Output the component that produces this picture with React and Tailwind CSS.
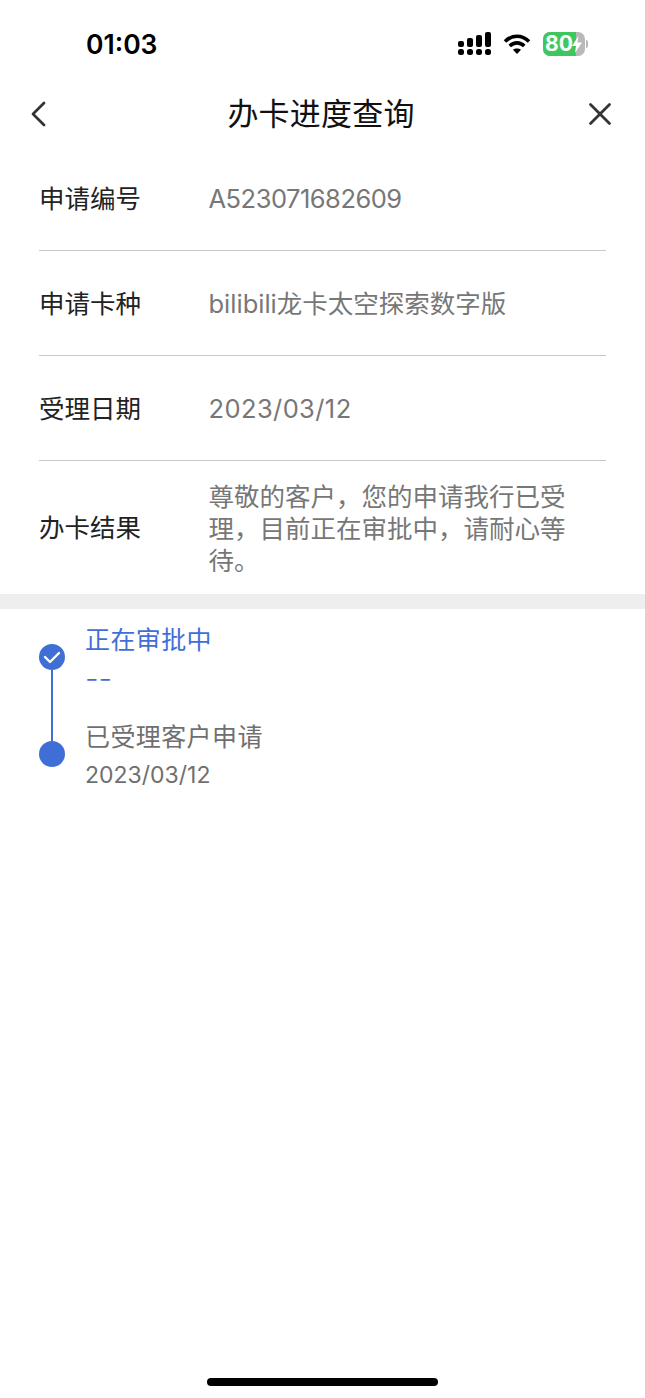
const CJK = "font-['Inter','Noto_Sans_CJK_SC',sans-serif]";

function StatusBar() {
  return (
    <div className="flex h-[84px] items-start justify-between pt-[26px] pl-[86px] pr-[57px]">
      <span className="text-[26.500px] leading-[36px] font-semibold text-black">01:03</span>
      <div className="mt-[6px] flex items-center">
        <svg width="34" height="24" viewBox="0 0 34 24" fill="#000">
          <rect x="0" y="9" width="6" height="6" rx="2" />
          <rect x="9" y="6" width="6" height="9" rx="2" />
          <rect x="18" y="3" width="6" height="12" rx="2" />
          <rect x="27" y="0" width="6" height="15" rx="2" />
          <rect x="0" y="17" width="6" height="6" rx="2.5" />
          <rect x="9" y="17" width="6" height="6" rx="2.5" />
          <rect x="18" y="17" width="6" height="6" rx="2.5" />
          <rect x="27" y="17" width="6" height="6" rx="2.5" />
        </svg>
        <svg className="ml-[11px]" width="28" height="22" viewBox="0 0 28 22" fill="none" stroke="#000" strokeWidth="3.6">
          <path d="M2 8.5C9 1.5 19 1.5 26 8.5" />
          <path d="M6.7 13C11 8.8 17 8.8 21.3 13" />
          <path d="M14 21l-4-4.2c2.2-1.9 5.800-1.900 8 0z" fill="#000" stroke="none" />
        </svg>
        <div className="relative ml-[12px] flex h-[24px] w-[42px] items-center overflow-hidden rounded-[7px] bg-[#b9b9b9]">
          <div className="h-full w-[33px] bg-[#3ec75f]" />
          <span className="absolute left-[2px] text-[21px] leading-[24px] font-bold text-white">80</span>
          <svg className="absolute right-[3px]" width="10" height="17" viewBox="0 0 10 17" fill="#fff">
            <path d="M6.500 0L0 10h4l-1 7L10 6.500H5.500z" />
          </svg>
        </div>
        <div className="ml-[1px] h-[8px] w-[2px] rounded-r-full bg-[#b9b9b9]" />
      </div>
    </div>
  );
}

function NavBar() {
  return (
    <div className="flex h-[60px] items-center justify-between pl-[30px] pr-[33px]">
      <div className="w-[24px]">
        <svg width="16" height="26" viewBox="0 0 16 26" fill="none" stroke="#333" strokeWidth="2.800" strokeLinecap="round" strokeLinejoin="round">
          <path d="M14 2L3 13l11 11" />
        </svg>
      </div>
      <h1 className="text-[31px] leading-[40px] font-normal tracking-[0.200px] text-[#111]">办卡进度查询</h1>
      <svg width="24" height="24" viewBox="0 0 24 24" fill="none" stroke="#333" strokeWidth="2.800" strokeLinecap="round">
        <path d="M2.500 2.500l19 19M21.500 2.500l-19 19" />
      </svg>
    </div>
  );
}

function Row({ label, value, valueClass }) {
  return (
    <div className="mx-[39px] flex h-[105px] items-center border-b border-[#c9c9c9] pt-[3px]">
      <span className="w-[169.500px] shrink-0 text-[25.500px] text-[#222]">{label}</span>
      <span className={`text-[25.500px] text-[#777] ${valueClass}`}>{value}</span>
    </div>
  );
}

function Timeline() {
  return (
    <div className="flex pt-[14px] pl-[39px]">
      <div className="flex w-[26px] flex-col items-center pt-[21px]">
        <div className="flex h-[26px] w-[26px] shrink-0 items-center justify-center rounded-full bg-[#3f6fd6]">
          <svg width="18" height="14" viewBox="0 0 18 14" fill="none" stroke="#fff" strokeWidth="2.400" strokeLinecap="round" strokeLinejoin="round">
            <path d="M2 7l5 5 9-9" />
          </svg>
        </div>
        <div className="h-[71px] w-[2px] bg-[#3f6fd6]" />
        <div className="h-[26px] w-[26px] shrink-0 rounded-full bg-[#3f6fd6]" />
      </div>
      <div className="ml-[20px]">
        <div className="text-[25px] leading-[34px] tracking-[0.400px] text-[#3f6fd6]">正在审批中</div>
        <div className="mt-[4px] text-[30px] leading-[34px] font-light text-[#3f6fd6]">--</div>
        <div className="mt-[25px] text-[25px] leading-[34px] tracking-[0.400px] text-[#6f6f6f]">已受理客户申请</div>
        <div className="mt-[4px] text-[23px] leading-[34px] text-[#6f6f6f]">2023/03/12</div>
      </div>
    </div>
  );
}

export default function App() {
  return (
    <div className={`relative flex h-[1398px] w-[645px] flex-col bg-white ${CJK}`}>
      <StatusBar />
      <NavBar />
      <div className="h-[2px]" />
      <Row label="申请编号" value="A523071682609" valueClass="tracking-[-0.500px]" />
      <Row label="申请卡种" value="bilibili龙卡太空探索数字版" />
      <Row label="受理日期" value="2023/03/12" valueClass="tracking-[0.400px]" />
      <div className="mx-[39px] flex h-[133px] items-center pt-[2px]">
        <span className="w-[169.500px] shrink-0 text-[25.500px] text-[#222]">办卡结果</span>
        <span className="text-[25.500px] leading-[32px] text-[#777]">尊敬的客户，您的申请我行已受理，目前正在审批中，请耐心等待。</span>
      </div>
      <div className="h-[15px] bg-[#eeeeee]" />
      <Timeline />
      <div className="mt-auto mb-[12px] h-[8px] w-[231px] self-center rounded-full bg-black" />
    </div>
  );
}
